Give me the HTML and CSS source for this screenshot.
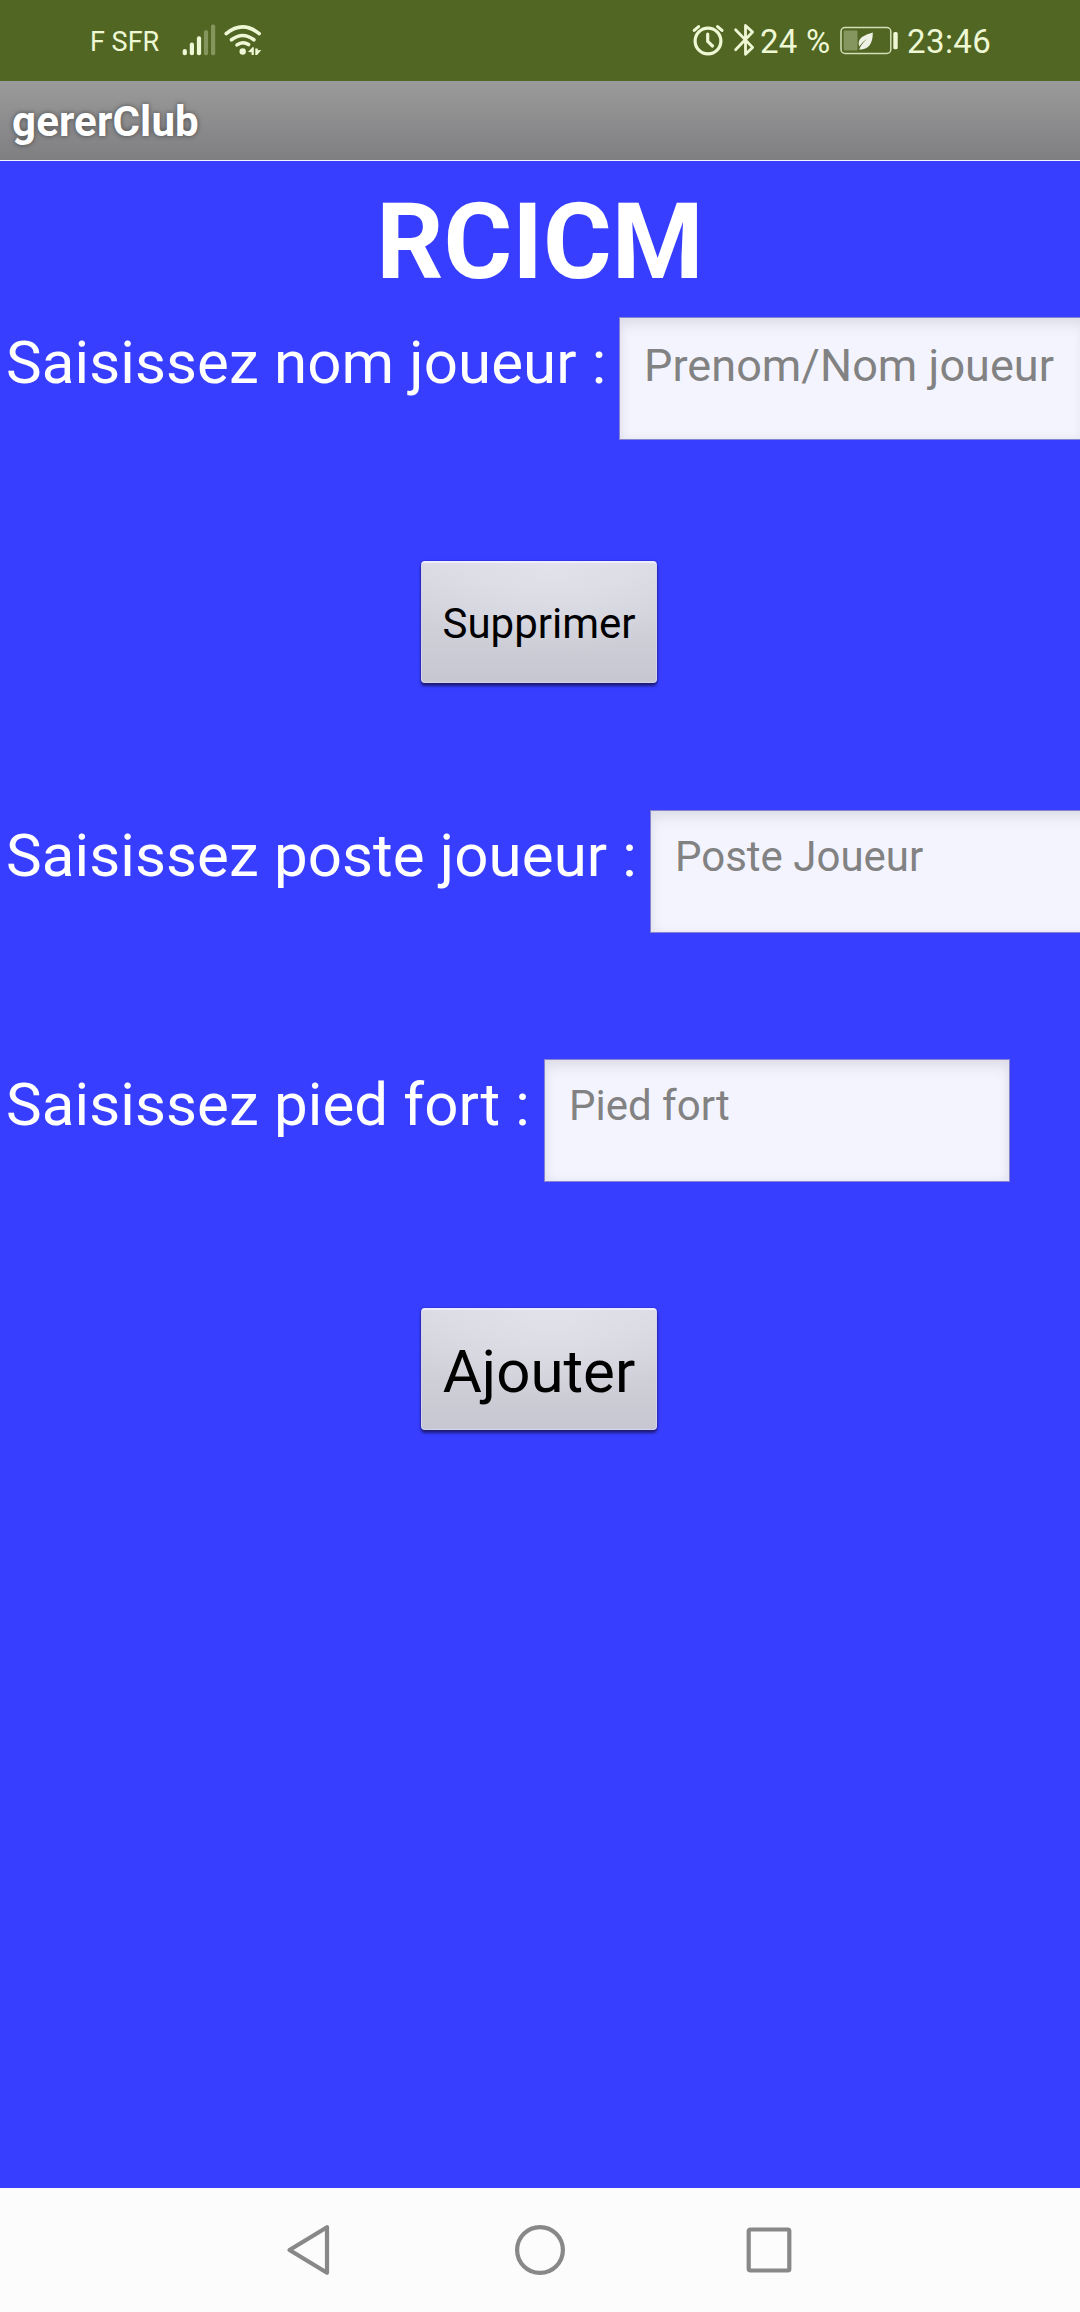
FILE: index.html
```html
<!DOCTYPE html>
<html lang="fr">
<head>
<meta charset="utf-8">
<title>gererClub</title>
<link rel="stylesheet" href="styles.css">
</head>
<body>
<div class="status-bar">
  <div class="status-left">
    <span class="carrier">F SFR</span>
    <svg class="signal" width="34" height="81" viewBox="182 0 34 81" fill="#eff8d5">
      <rect x="182.7" y="49" width="4.2" height="6.2" rx="2"/>
      <rect x="189.8" y="42.6" width="4.2" height="12.6" rx="2"/>
      <rect x="196.9" y="36.3" width="4.2" height="18.9" rx="2"/>
      <rect x="203.9" y="30.3" width="4.2" height="24.9" rx="1.6" opacity=".33"/>
      <rect x="211" y="24.6" width="4.2" height="30.6" rx="1.6" opacity=".33"/>
    </svg>
    <svg class="wifi" width="40" height="81" viewBox="223 0 40 81" fill="none" stroke="#eff8d5" stroke-width="3.6" stroke-linecap="round">
      <path d="M226.2 33.6Q242.7 20.2 259.2 33.6"/>
      <path d="M231.5 39.8Q242.7 31.2 253.9 39.8"/>
      <path d="M237 44.9Q242.7 40.7 248.6 44.6"/>
      <circle cx="242.7" cy="51.5" r="3.2" fill="#eff8d5" stroke="none"/>
      <path d="M248 52l4.5-4.8h1.3V55h-2.2v-2.8zM255.3 48.5h2.4v1.8l3.6-.3-4.2 5h-1.8z" fill="#eff8d5" stroke="none"/>
    </svg>
  </div>
  <div class="status-right">
    <svg width="32" height="81" viewBox="692 0 32 81" fill="none" stroke="#eff8d5" stroke-width="3.2" stroke-linecap="round" stroke-linejoin="round">
      <circle cx="708" cy="41" r="12.9"/>
      <path d="M707.7 34.2v7.2l4.8 4.6"/>
      <path d="M694.2 30.4l4.4-3.8M717.6 26.6l4.4 3.8" stroke-width="3"/>
    </svg>
    <svg class="bluetooth" width="22" height="81" viewBox="733 0 22 81" fill="none" stroke="#eff8d5" stroke-width="2.8" stroke-linecap="round" stroke-linejoin="round">
      <path d="M735.6 29.8l17 17.6-7.1 6.9V25.5l7.1 6.5-17 17.8"/>
    </svg>
    <span class="charge">24 %</span>
    <svg class="battery" width="60" height="81" viewBox="839 0 60 81">
      <rect x="841" y="27.6" width="49.8" height="25.8" rx="4" fill="none" stroke="#d4dfb5" stroke-width="1.5"/>
      <rect x="843.7" y="30.5" width="13.8" height="20" rx="1" fill="#86965f"/>
      <path d="M872.8 32.6C865 35 859 37.5 858.7 43c-.1 2.2.6 3.5.6 3.500s4-5.500 7.500-7.500c-3.500 3.500-6 6.500-7.600 10.400h2C868 49.500 873 44 872.800 32.600z" fill="#eef1e6"/>
      <rect x="893.3" y="32" width="4.4" height="17.300" rx="1.500" fill="#eff8d5"/>
    </svg>
    <span class="clock">23:46</span>
  </div>
</div>
<header class="title-bar">gererClub</header>
<main class="screen">
  <h1 class="club">RCICM</h1>
  <div class="row">
    <label class="label name-label" for="nom">Saisissez nom joueur :</label>
    <input class="field name-field" id="nom" placeholder="Prenom/Nom joueur">
  </div>
  <button class="button delete">Supprimer</button>
  <div class="row">
    <label class="label post-label" for="poste">Saisissez poste joueur :</label>
    <input class="field" id="poste" placeholder="Poste Joueur">
  </div>
  <div class="row">
    <label class="label foot-label" for="pied">Saisissez pied fort :</label>
    <input class="field" id="pied" placeholder="Pied fort">
  </div>
  <button class="button add">Ajouter</button>
</main>
<nav class="nav-bar">
  <svg width="50" height="56" viewBox="0 0 50 56"><path d="M43 5.200V50.800L5.500 28z"/></svg>
  <svg width="56" height="56" viewBox="0 0 56 56"><circle cx="29" cy="28" r="22.900"/></svg>
  <svg width="50" height="56" viewBox="0 0 50 56"><rect x="4.700" y="7.500" width="40.600" height="41" rx="1.500"/></svg>
</nav>
</body>
</html>
```
FILE: styles.css
```css
* {
  box-sizing: border-box;
}

body {
  margin: 0;
  width: 1080px;
  height: 2312px;
  display: flex;
  flex-direction: column;
  overflow: hidden;
  font-family: Roboto, sans-serif;
  background: #373eff;
}

svg {
  display: block;
  flex: none;
}

.status-bar {
  flex: none;
  height: 81px;
  display: flex;
  justify-content: space-between;
  padding: 0 88px 0 90px;
  background: #516623;
  color: #eff8d5;
  line-height: 83px;
  white-space: nowrap;
}

.status-left,
.status-right {
  display: flex;
}

.carrier {
  width: 92px;
  font-size: 27px;
  line-height: 84px;
}

.wifi {
  margin-left: 7px;
}

.bluetooth {
  margin-left: 9px;
}

.charge {
  width: 79px;
  margin-left: 5px;
  font-size: 33px;
  letter-spacing: 0.2px;
}

.clock {
  width: 85px;
  margin-left: 8px;
  font-size: 33px;
  letter-spacing: 0.4px;
}

.title-bar {
  flex: none;
  height: 80px;
  padding-left: 12px;
  border-bottom: 1px solid #f2f2ff;
  background: linear-gradient(#9b9b9b, #7f7f82);
  color: #fff;
  font-size: 42px;
  font-weight: 700;
  letter-spacing: 0.15px;
  line-height: 82px;
  text-shadow: 0 0 5px rgba(0, 0, 0, 0.5);
}

.screen {
  flex: 1;
  display: flex;
  flex-direction: column;
}

.club {
  margin: 0;
  padding-top: 7px;
  height: 156px;
  color: #fff;
  font-size: 105px;
  font-weight: 700;
  line-height: 150px;
  text-align: center;
}

.row {
  display: flex;
  height: 123px;
  padding-left: 6px;
}

.label {
  flex: none;
  color: #fff;
  font-size: 60px;
  letter-spacing: 0.11px;
  line-height: 91px;
  white-space: nowrap;
}

.name-label {
  width: 613px;
}

.post-label {
  width: 644px;
}

.foot-label {
  width: 538px;
}

.field {
  flex: none;
  width: 466px;
  height: 123px;
  padding: 0 22px 30px 24px;
  border: 1px solid #8583cf;
  border-radius: 0;
  outline: none;
  background: #f4f4ff;
  box-shadow: inset 0 8px 14px -2px #dddde8, inset 0 0 8px #e4e4f2;
  font-family: inherit;
  font-size: 42px;
}

.field::placeholder {
  color: #828282;
  opacity: 1;
}

.name-field {
  padding-bottom: 26px;
  font-size: 45px;
  letter-spacing: 0.05px;
}

.button {
  align-self: center;
  width: 236px;
  height: 122px;
  padding: 0;
  border: 1px solid #d5d5ec;
  border-top: 2px solid #ededff;
  border-radius: 4px;
  background: radial-gradient(ellipse 70% 75% at 55% 0, #e2e2eb, transparent), linear-gradient(#dadae3, #c7c7d1);
  box-shadow: 0 3px 3px rgba(25, 20, 90, 0.8), 0 0 2px #2726a0;
  color: #000;
  font-family: inherit;
  font-size: 42px;
  white-space: nowrap;
}

.delete {
  margin: 121px 2px 127px 0;
  padding-top: 1px;
}

.row + .row {
  margin-top: 126px;
}

.add {
  margin: 126px 2px 0 0;
  padding-top: 4px;
  font-size: 60px;
}

.nav-bar {
  flex: none;
  height: 124px;
  display: flex;
  align-items: center;
  justify-content: space-between;
  padding: 0 286px 0 284px;
  background: #fcfcfc;
}

.nav-bar svg {
  fill: none;
  stroke: #888;
  stroke-width: 4.2px;
  stroke-linejoin: round;
}
```
